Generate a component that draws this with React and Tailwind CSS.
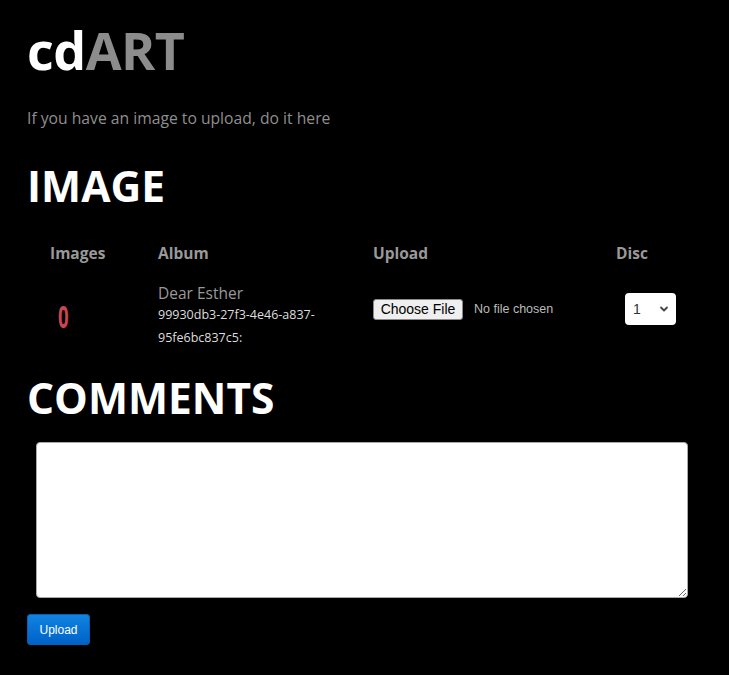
export default function App() {
  const sans = { fontFamily: '"Open Sans", sans-serif' };
  const arial = { fontFamily: '"Liberation Sans", Arial, sans-serif' };
  return (
    <div className="min-h-[675px] bg-black px-[27px] pt-[20px]" style={sans}>
      <h1 className="text-[52px] font-bold leading-[60px] tracking-[-0.5px] text-white">
        cd<span className="text-[#8c8c8c]">ART</span>
      </h1>
      <p className="mt-[28px] text-[15.7px] leading-[20px] text-[#8f8f8f]">If you have an image to upload, do it here</p>

      <h2 className="mt-[33px] text-[42.5px] font-bold leading-[50px] text-white">IMAGE</h2>

      {/* table */}
      <div className="mt-[32px] grid grid-cols-[131px_215px_243px_1fr] text-[15.5px]">
        <div className="h-[39px] pl-[23px] font-bold leading-[20px] text-[#999]">Images</div>
        <div className="h-[39px] font-bold leading-[20px] text-[#999]">Album</div>
        <div className="h-[39px] font-bold leading-[20px] text-[#999]">Upload</div>
        <div className="h-[39px] font-bold leading-[20px] text-[#999]">Disc</div>

        <div className="pl-[31px] pt-[20px]">
          <span className="inline-block origin-left scale-x-[0.62] text-[30px] font-bold leading-[30px] text-[#c9474f]">0</span>
        </div>
        <div className="h-[68px] w-[165px] overflow-hidden">
          <div className="text-[15.5px] leading-[22px] text-[#999]">Dear Esther</div>
          <div className="text-[12.5px] leading-[22.5px] text-[#ddd]">99930db3-27f3-4e46-a837-95fe6bc837c5:</div>
        </div>
        <div className="pt-[17px]">
          <label className="flex items-center" style={arial}>
            <span className="flex h-[21px] w-[90px] items-center justify-center rounded-[3px] border border-[#8a8a8a] bg-[#efefef] text-[14px] text-black">Choose File</span>
            <span className="ml-[11px] text-[12.5px] text-[#bbb]">No file chosen</span>
          </label>
        </div>
        <div className="pl-[9px] pt-[11px]">
          <div className="flex h-[32px] w-[51px] items-center justify-between rounded-[4px] bg-white pl-[8px] pr-[7px]" style={arial}>
            <span className="text-[14px] text-[#333]">1</span>
            <svg width="10" height="10" viewBox="0 0 10 10" className="text-[#444]">
              <path d="M2 3.5 L5 6.5 L8 3.5" stroke="currentColor" strokeWidth="1.8" fill="none" strokeLinecap="round" strokeLinejoin="round" />
            </svg>
          </div>
        </div>
      </div>

      <h2 className="mt-[23px] text-[42.5px] font-bold leading-[50px] text-white">COMMENTS</h2>

      <div className="mt-[19px] pl-[9px] pr-[14px]">
        <textarea className="block h-[156px] w-full resize-y rounded-[4px] border border-[#aaa] bg-white" />
      </div>

      <button
        className="mt-[16px] h-[31px] w-[63px] rounded-[3px] border border-[#0a5fb4] bg-gradient-to-b from-[#1283e0] to-[#0062c8] text-[12px] text-white"
        style={arial}
      >
        Upload
      </button>
    </div>
  );
}
